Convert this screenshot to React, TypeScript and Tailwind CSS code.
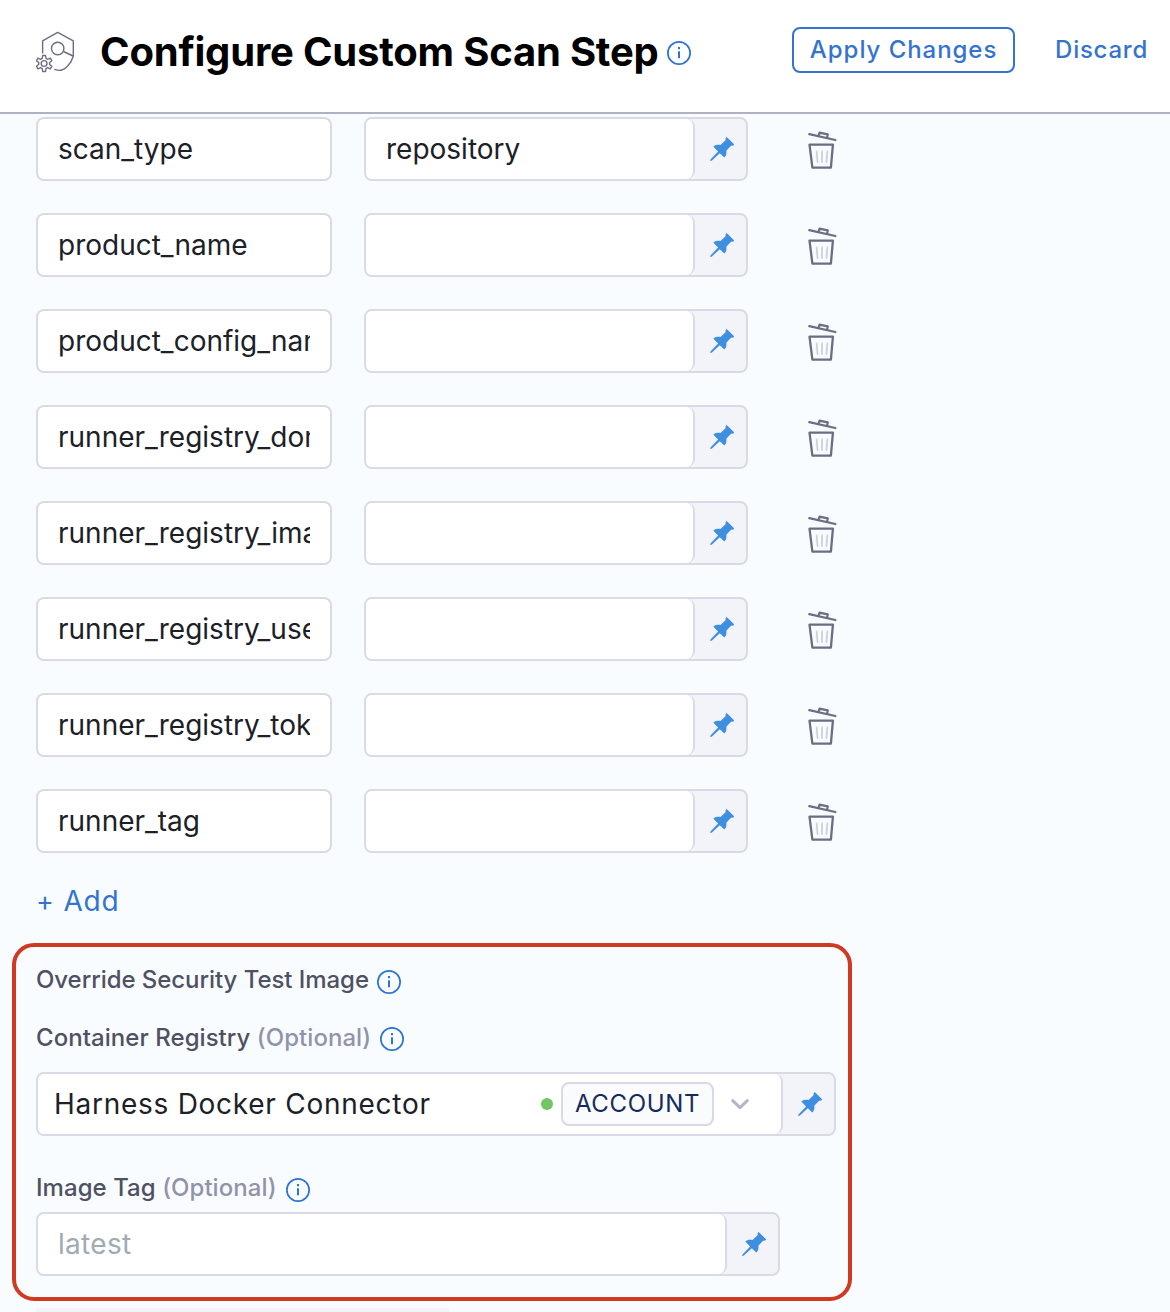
import React from "react";

const ROWS: { name: string; value: string }[] = [
  { name: "scan_type", value: "repository" },
  { name: "product_name", value: "" },
  { name: "product_config_name", value: "" },
  { name: "runner_registry_domain", value: "" },
  { name: "runner_registry_image_prefix", value: "" },
  { name: "runner_registry_username", value: "" },
  { name: "runner_registry_token", value: "" },
  { name: "runner_tag", value: "" },
];

function StepIcon() {
  return (
    <svg className="h-[42px] w-[40px] shrink-0" viewBox="0 0 40 42" fill="none" stroke="#6b6d85" strokeWidth="1.4" strokeLinejoin="round">
      <path d="M6.600 22.500V9.800L21.700 1.400l15.600 8.400V25C35.500 32 29 39.600 22.500 39.400L18.300 38.400" />
      <circle cx="21.700" cy="17.500" r="6.200" />
      <path d="M27.500 20.500l9.500 4.500" />
      <circle cx="8.100" cy="32.500" r="2.900" />
      <path d="M6.700 24.500h2.800l.5 2.900 1.600.9 2.700-1.100 1.500 2.500-2.200 1.800v2l2.200 1.800-1.500 2.500-2.700-1.100-1.600.9-.5 2.900H6.700l-.5-2.900-1.600-.9-2.700 1.100-1.400-2.500 2.200-1.800v-2L.5 29.700l1.400-2.500 2.700 1.100 1.600-.9z" />
    </svg>
  );
}

function Info() {
  return (
    <svg className="size-6 shrink-0" viewBox="0 0 24 24" fill="none" stroke="#2f74d0" strokeWidth="1.700">
      <circle cx="12" cy="12" r="11.150" />
      <path d="M12 10.300v7M12 6v2.300" strokeWidth="2" />
    </svg>
  );
}

function PinButton() {
  return (
    <span className="flex w-[51px] shrink-0 items-center justify-center pl-[3px]">
      <svg className="size-[26px]" viewBox="0 0 26 26" fill="#3f8fe0">
        <path d="M17.700 1.100L25.300 8.600C24.400 9.700 23.200 10 22.100 9.700L17.300 14.700C17.800 17.200 17.300 19.700 15.300 21.600L10.800 17.200L2.600 24.700L1.200 25L1.500 23.500L9.100 15.500L4.300 10.500C6 8.700 8.900 8.400 11.500 9L16.600 4.300C16.200 3.100 16.700 1.900 17.700 1.100Z" />
      </svg>
    </span>
  );
}

function PinnedField({ width, children }: { width: string; children?: React.ReactNode }) {
  return (
    <div className={`flex h-16 overflow-hidden rounded-lg border-2 border-[#d9dae5] bg-[#f3f3fa] ${width}`}>
      <div className="flex min-w-0 flex-1 items-center rounded-r-lg border-r-2 border-[#d9dae5] bg-white">{children}</div>
      <PinButton />
    </div>
  );
}

function Trash() {
  return (
    <svg className="h-10 w-8 shrink-0" viewBox="0 0 32 40" fill="none" stroke="#6b6d85" strokeWidth="2.300" strokeLinecap="round" strokeLinejoin="round">
      <path d="M3.300 4.200L29.300 10" />
      <path d="M12.700 5.700l.8-3 8.200 1.700-.6 3.200" />
      <path d="M3.500 14.600h23.400L24.900 37.600H6.400z" />
      <path d="M10.700 21.500l.8 10.500M16 21.500V32M21.300 21.500L20.500 32" stroke="#cdd0dc" strokeWidth="1.800" />
    </svg>
  );
}

function Label({ text, optional }: { text: string; optional?: boolean }) {
  return (
    <div className={`flex h-8 items-center text-[24px] leading-8 font-medium text-[#4f5162] ${optional ? "gap-[9px] tracking-[0.050px]" : "gap-2 tracking-[-0.060px]"}`}>
      <span className="whitespace-pre">
        {text}
        {optional && <span className="text-[#9293ab]"> (Optional)</span>}
      </span>
      <span className={text === "Container Registry" ? "pt-0.5" : "pt-1"}>
        <Info />
      </span>
    </div>
  );
}

export default function App() {
  return (
    <div className="h-[1312px] w-[1170px] overflow-hidden bg-[#f8fcff] font-['Inter',sans-serif]">
      <header className="flex h-[114px] items-start border-b-2 border-[#b0b1c4] bg-white pl-9">
        <div className="mt-[31px]">
          <StepIcon />
        </div>
        <h1 className="mt-7 ml-6 text-[40px] leading-12 font-bold tracking-[-0.200px] whitespace-nowrap text-black">Configure Custom Scan Step</h1>
        <div className="mt-[41px] ml-2">
          <Info />
        </div>
        <div className="mt-[27px] mr-[22px] ml-auto flex items-center gap-10 text-[24px] font-medium text-[#3474ce]">
          <button className="h-[46px] w-[223px] rounded-lg border-2 border-[#3474ce] leading-[42px] tracking-[0.950px] whitespace-nowrap">Apply Changes</button>
          <button className="tracking-[0.750px] whitespace-nowrap">Discard</button>
        </div>
      </header>

      <main className="pt-[3px] text-[28px] text-[#1c2127]">
        <div className="flex flex-col gap-8 pl-9">
          {ROWS.map((row) => (
            <div key={row.name} className="flex items-center">
              <div className="h-16 w-[296px] rounded-lg border-2 border-[#d9dae5] bg-white px-5">
                <div className="overflow-hidden leading-[61px] whitespace-nowrap">{row.name}</div>
              </div>
              <div className="ml-8">
                <PinnedField width="w-[384px]">
                  <span className="pl-5">{row.value}</span>
                </PinnedField>
              </div>
              <div className="ml-[58px] pt-0.5">
                <Trash />
              </div>
            </div>
          ))}
        </div>

        <button className="mt-7 ml-9 flex h-10 items-center gap-[9px] tracking-[0.700px] text-[#3474ce]">
          <span className="pt-0.5 text-[27px]">+</span>
          <span>Add</span>
        </button>

        <section className="mt-[22px] ml-3 h-[358px] w-[840px] rounded-[22px] border-4 border-[#d13a22] pt-[17px] pl-5">
          <Label text="Override Security Test Image" />
          <div className="mt-[26px]">
            <Label text="Container Registry" optional />
          </div>
          <div className="mt-[18px]">
            <PinnedField width="w-[800px]">
              <span className="pl-4 tracking-[0.730px]">Harness Docker Connector</span>
              <span className="mr-2 ml-auto size-3 rounded-full bg-[#71c562]" />
              <span className="flex h-11 w-[153px] items-center justify-center rounded-lg border-2 border-[#d9dae5] bg-[#fafbfd] text-[24px] tracking-[0.650px] text-[#152c5b]">
                ACCOUNT
              </span>
              <svg className="mr-[31px] ml-[16px] size-5" viewBox="0 0 20 20" fill="none" stroke="#b4b5c5" strokeWidth="3" strokeLinecap="round" strokeLinejoin="round">
                <path d="M2.700 6.700l7.300 7 7.300-7" />
              </svg>
            </PinnedField>
          </div>
          <div className="mt-9">
            <Label text="Image Tag" optional />
          </div>
          <div className="mt-2">
            <PinnedField width="w-[744px]">
              <span className="pl-5 tracking-[0.300px] text-[#a1abb3]">latest</span>
            </PinnedField>
          </div>
        </section>
        <div className="mt-[7px] ml-9 h-1 w-[413px] bg-[#f3f3fa]" />
      </main>
    </div>
  );
}
